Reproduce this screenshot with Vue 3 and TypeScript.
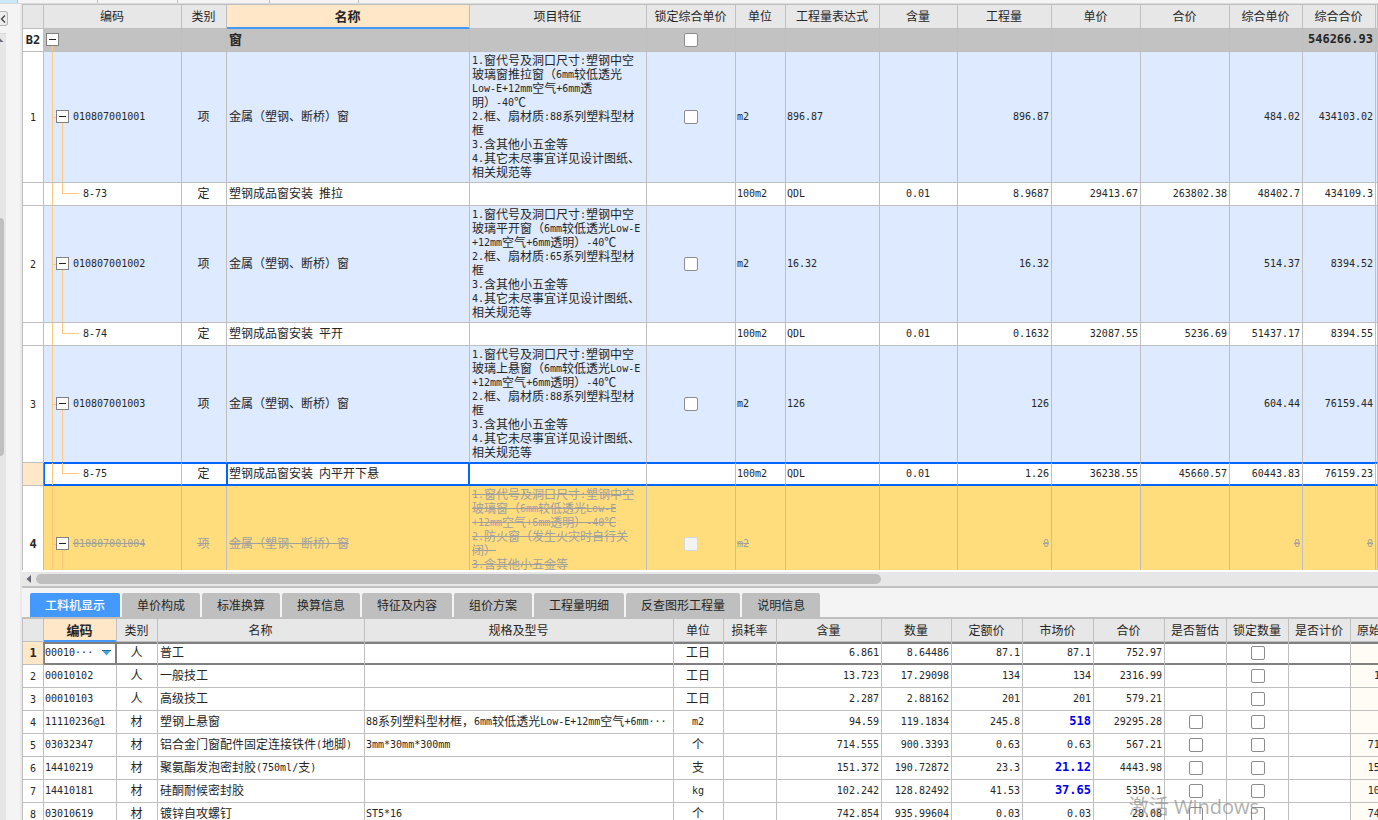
<script setup lang="ts">
import { h } from 'vue'

type Align = 'left' | 'center' | 'right'
interface Column { title: string; width?: number; align: Align }
interface BillRow {
  no: string
  kind: 'group' | 'item' | 'sub' | 'void'
  code: string
  type: string
  name: string
  feature: string[]
  check: boolean
  values: string[]
  selected?: boolean
}
interface Material {
  no: number
  code: string
  type: string
  name: string
  spec: string
  unit: string
  values: string[]
  changed?: boolean
  estimate?: boolean
  original: string
}

/* Latin runs are set in a monospaced face, half as wide as the ideographs. */
const Cell = (props: { text: string }) =>
  h(
    'span',
    { class: 'txt' },
    (props.text.match(/[\x20-\x7e\xb7]+|[^\x20-\x7e\xb7]+/g) ?? []).map((part) =>
      /^[\x20-\x7e\xb7]/.test(part) ? h('span', { class: 'lat' }, part) : part,
    ),
  )
Cell.props = ['text']

const billColumns: Column[] = [
  { title: '', width: 21, align: 'center' },
  { title: '编码', width: 138, align: 'left' },
  { title: '类别', width: 45, align: 'center' },
  { title: '名称', width: 243, align: 'left' },
  { title: '项目特征', width: 177, align: 'left' },
  { title: '锁定综合单价', width: 89, align: 'center' },
  { title: '单位', width: 50, align: 'left' },
  { title: '工程量表达式', width: 94, align: 'left' },
  { title: '含量', width: 78, align: 'center' },
  { title: '工程量', width: 94, align: 'right' },
  { title: '单价', width: 89, align: 'right' },
  { title: '合价', width: 89, align: 'right' },
  { title: '综合单价', width: 73, align: 'right' },
  { title: '综合合价', width: 73, align: 'right' },
  { title: '', align: 'left' },
]

const tailA = ['3.含其他小五金等', '4.其它未尽事宜详见设计图纸、', '相关规范等']
const itemName = '金属（塑钢、断桥）窗'

const bill: BillRow[] = [
  { no: 'B2', kind: 'group', code: '', type: '', name: '窗', feature: [], check: true, values: ['', '', '', '', '', '', '', '546266.93'] },
  {
    no: '1', kind: 'item', code: '010807001001', type: '项', name: itemName, check: true,
    feature: ['1.窗代号及洞口尺寸:塑钢中空', '玻璃窗推拉窗（6mm较低透光', 'Low-E+12mm空气+6mm透', '明）-40℃', '2.框、扇材质:88系列塑料型材', '框', ...tailA],
    values: ['m2', '896.87', '', '896.87', '', '', '484.02', '434103.02'],
  },
  { no: '', kind: 'sub', code: '8-73', type: '定', name: '塑钢成品窗安装 推拉', feature: [], check: false, values: ['100m2', 'QDL', '0.01', '8.9687', '29413.67', '263802.38', '48402.7', '434109.3'] },
  {
    no: '2', kind: 'item', code: '010807001002', type: '项', name: itemName, check: true,
    feature: ['1.窗代号及洞口尺寸:塑钢中空', '玻璃平开窗（6mm较低透光Low-E', '+12mm空气+6mm透明）-40℃', '2.框、扇材质:65系列塑料型材', '框', ...tailA],
    values: ['m2', '16.32', '', '16.32', '', '', '514.37', '8394.52'],
  },
  { no: '', kind: 'sub', code: '8-74', type: '定', name: '塑钢成品窗安装 平开', feature: [], check: false, values: ['100m2', 'QDL', '0.01', '0.1632', '32087.55', '5236.69', '51437.17', '8394.55'] },
  {
    no: '3', kind: 'item', code: '010807001003', type: '项', name: itemName, check: true,
    feature: ['1.窗代号及洞口尺寸:塑钢中空', '玻璃上悬窗（6mm较低透光Low-E', '+12mm空气+6mm透明）-40℃', '2.框、扇材质:88系列塑料型材', '框', ...tailA],
    values: ['m2', '126', '', '126', '', '', '604.44', '76159.44'],
  },
  { no: '', kind: 'sub', code: '8-75', type: '定', name: '塑钢成品窗安装 内平开下悬', feature: [], check: false, selected: true, values: ['100m2', 'QDL', '0.01', '1.26', '36238.55', '45660.57', '60443.83', '76159.23'] },
  {
    no: '4', kind: 'void', code: '010807001004', type: '项', name: itemName, check: true,
    feature: ['1.窗代号及洞口尺寸:塑钢中空', '玻璃窗（6mm较低透光Low-E', '+12mm空气+6mm透明）-40℃', '2.防火窗（发生火灾时自行关', '闭）', '3.含其他小五金等'],
    values: ['m2', '', '', '0', '', '', '0', '0'],
  },
]

const tabs = ['工料机显示', '单价构成', '标准换算', '换算信息', '特征及内容', '组价方案', '工程量明细', '反查图形工程量', '说明信息']

const materialColumns: Column[] = [
  { title: '', width: 21, align: 'center' },
  { title: '编码', width: 73, align: 'left' },
  { title: '类别', width: 41, align: 'center' },
  { title: '名称', width: 207, align: 'left' },
  { title: '规格及型号', width: 309, align: 'left' },
  { title: '单位', width: 50, align: 'center' },
  { title: '损耗率', width: 53, align: 'right' },
  { title: '含量', width: 105, align: 'right' },
  { title: '数量', width: 70, align: 'right' },
  { title: '定额价', width: 71, align: 'right' },
  { title: '市场价', width: 71, align: 'right' },
  { title: '合价', width: 71, align: 'right' },
  { title: '是否暂估', width: 62, align: 'center' },
  { title: '锁定数量', width: 62, align: 'center' },
  { title: '是否计价', width: 62, align: 'center' },
  { title: '原始含量', width: 62, align: 'right' },
]

const materials: Material[] = [
  { no: 1, code: '00010···', type: '人', name: '普工', spec: '', unit: '工日', values: ['6.861', '8.64486', '87.1', '87.1', '752.97'], original: '6.861' },
  { no: 2, code: '00010102', type: '人', name: '一般技工', spec: '', unit: '工日', values: ['13.723', '17.29098', '134', '134', '2316.99'], original: '13.723' },
  { no: 3, code: '00010103', type: '人', name: '高级技工', spec: '', unit: '工日', values: ['2.287', '2.88162', '201', '201', '579.21'], original: '2.287' },
  { no: 4, code: '11110236@1', type: '材', name: '塑钢上悬窗', spec: '88系列塑料型材框，6mm较低透光Low-E+12mm空气+6mm···', unit: 'm2', values: ['94.59', '119.1834', '245.8', '518', '29295.28'], changed: true, estimate: true, original: '94.59' },
  { no: 5, code: '03032347', type: '材', name: '铝合金门窗配件固定连接铁件(地脚)', spec: '3mm*30mm*300mm', unit: '个', values: ['714.555', '900.3393', '0.63', '0.63', '567.21'], estimate: true, original: '714.555' },
  { no: 6, code: '14410219', type: '材', name: '聚氨酯发泡密封胶(750ml/支)', spec: '', unit: '支', values: ['151.372', '190.72872', '23.3', '21.12', '4443.98'], changed: true, estimate: true, original: '151.372' },
  { no: 7, code: '14410181', type: '材', name: '硅酮耐候密封胶', spec: '', unit: 'kg', values: ['102.242', '128.82492', '41.53', '37.65', '5350.1'], changed: true, estimate: true, original: '102.242' },
  { no: 8, code: '03010619', type: '材', name: '镀锌自攻螺钉', spec: 'ST5*16', unit: '个', values: ['742.854', '935.99604', '0.03', '0.03', '28.08'], estimate: true, original: '742.854' },
]
</script>

<template>
  <div class="app">
    <div class="strip">
      <i class="s on"></i><i class="s a"></i><i class="s a"></i><i class="s b"></i><i class="s c"></i><i class="s rest"></i>
    </div>
    <div class="body">
      <aside class="side">
        <button class="collapse" type="button" aria-label="收起">
          <svg width="6" height="10" viewBox="0 0 6 10"><path d="M5 1.5 1.5 5 5 8.5" fill="none" stroke="#444" stroke-width="1.3" /></svg>
        </button>
        <div class="vtrack">
          <svg class="up" width="4" height="4" viewBox="0 0 4 4"><path d="M0 0.5 3.5 4H0z" fill="#6b6b7b" /></svg>
          <div class="vthumb"></div>
        </div>
      </aside>

      <main class="main">
        <section class="bill">
          <table class="grid">
            <colgroup><col v-for="(c, i) in billColumns" :key="i" :style="{ width: c.width ? c.width + 'px' : undefined }" /></colgroup>
            <thead>
              <tr>
                <th v-for="(c, i) in billColumns" :key="i" :class="{ current: i === 3 }">{{ c.title }}</th>
              </tr>
            </thead>
            <tbody>
              <tr v-for="row in bill" :key="row.code" :class="[row.kind, { selected: row.selected }]">
                <td class="no center"><Cell :text="row.no" /></td>
                <td class="tree">
                  <i class="trunk"></i>
                  <i v-if="row.kind === 'item' || row.kind === 'void'" class="branch"></i>
                  <i v-if="row.kind !== 'group'" class="twig"></i>
                  <button v-if="row.kind !== 'sub'" class="toggle" type="button" aria-label="折叠">
                    <svg width="11" height="11" viewBox="0 0 11 11"><path d="M2 5.5h7" stroke="#222" /></svg>
                  </button>
                  <Cell :text="row.code" />
                </td>
                <td class="center"><Cell :text="row.type" /></td>
                <td class="name"><Cell :text="row.name" /></td>
                <td class="feature"><div v-for="line in row.feature" :key="line" class="line"><Cell :text="line" /></div></td>
                <td class="check"><input v-if="row.check" type="checkbox" aria-label="锁定综合单价" :disabled="row.kind === 'void'" /></td>
                <td v-for="(v, i) in row.values" :key="i" :class="billColumns[i + 6].align"><Cell :text="v" /></td>
                <td></td>
              </tr>
            </tbody>
          </table>
        </section>

        <div class="hscroll">
          <svg class="prev" width="6" height="8" viewBox="0 0 6 8"><path d="M5 0v8L0.5 4z" fill="#666672" /></svg>
          <div class="rail"><div class="hthumb"></div></div>
        </div>

        <nav class="tabs">
          <button v-for="(t, i) in tabs" :key="t" type="button" :class="{ active: i === 0 }">{{ t }}</button>
        </nav>

        <section class="materials">
          <table class="grid wide">
            <colgroup><col v-for="(c, i) in materialColumns" :key="i" :style="{ width: c.width + 'px' }" /></colgroup>
            <thead>
              <tr>
                <th v-for="(c, i) in materialColumns" :key="i" :class="{ current: i === 1 }">{{ c.title }}</th>
              </tr>
            </thead>
            <tbody>
              <tr v-for="m in materials" :key="m.no" :class="{ active: m.no === 1 }">
                <td class="no center"><Cell :text="String(m.no)" /></td>
                <td class="mcode">
                  <div v-if="m.no === 1" class="picker">
                    <select aria-label="编码"><option>{{ m.code }}</option></select>
                    <svg width="9" height="6" viewBox="0 0 9 6"><path d="M0 0.5h9L4.5 5.5z" fill="#4aa3dc" /><path d="M0 0.5h9" stroke="#2d6f9e" /></svg>
                  </div>
                  <Cell v-else :text="m.code" />
                </td>
                <td class="center"><Cell :text="m.type" /></td>
                <td class="name"><Cell :text="m.name" /></td>
                <td><Cell :text="m.spec" /></td>
                <td class="center"><Cell :text="m.unit" /></td>
                <td></td>
                <td v-for="(v, i) in m.values" :key="i" class="right" :class="{ changed: m.changed && i === 3 }"><Cell :text="v" /></td>
                <td class="check"><input v-if="m.estimate" type="checkbox" aria-label="是否暂估" /></td>
                <td class="check"><input type="checkbox" aria-label="锁定数量" /></td>
                <td></td>
                <td class="right original"><Cell :text="m.original" /></td>
              </tr>
            </tbody>
          </table>
        </section>
      </main>
    </div>
    <div class="watermark">激活 Windows</div>
  </div>
</template>

<style>
body {
  margin: 0;
  overflow: hidden;
}
</style>

<style scoped>
.app {
  position: relative;
  display: flex;
  flex-direction: column;
  height: 100vh;
  overflow: hidden;
  background: #f4f4f4;
  color: #262626;
  font: 12px/14px 'Noto Sans CJK SC', sans-serif;
}
button {
  font: inherit;
  color: inherit;
  padding: 0;
}
.strip {
  display: flex;
  flex: 0 0 4px;
  box-sizing: border-box;
  border-bottom: 1px solid #d9d9d9;
}
.s {
  box-sizing: border-box;
  width: 80px;
  border-right: 1px solid #bfbfbf;
}
.s.on {
  width: 18px;
  background: #cce8ff;
}
.s.b {
  width: 92px;
}
.s.c {
  width: 89px;
}
.s.rest {
  flex: 1;
  border: 0;
}
.body {
  display: flex;
  flex: 1;
  min-height: 0;
}
.side {
  display: flex;
  flex-direction: column;
  flex: 0 0 22px;
  box-sizing: border-box;
  border-right: 2px solid #e9e9e9;
}
.collapse {
  display: flex;
  align-items: center;
  box-sizing: border-box;
  width: 8px;
  height: 15px;
  margin: 7px 0;
  border: 1px solid #b5b5b5;
  border-left: 0;
  border-radius: 0 3px 3px 0;
  background: #ececec;
}
.vtrack {
  flex: 1;
  width: 6px;
  background: #e6e6e6;
  border-top: 1px solid #dcdcdc;
}
.up {
  display: block;
  margin-top: 4px;
}
.vthumb {
  width: 4px;
  height: 238px;
  margin-top: 176px;
  border-radius: 0 5px 5px 0;
  background: #bfbfbf;
}
.main {
  display: flex;
  flex: 1;
  flex-direction: column;
  min-width: 0;
}
.bill {
  flex: 1;
  min-height: 0;
  overflow: hidden;
  border-bottom: 2px solid #fff;
}
.grid {
  table-layout: fixed;
  width: 100%;
  border-spacing: 0;
  border-top: 1px solid #bfbfbf;
  border-left: 1px solid #bfbfbf;
  background: #fff;
}
.wide {
  min-width: 1391px;
  border-top: 2px solid #bfbfbf;
}
th,
td {
  box-sizing: border-box;
  height: 23px;
  padding: 0 2px 2px 1px;
  border-right: 1px solid #bfbfbf;
  border-bottom: 1px solid #bfbfbf;
  overflow: hidden;
  white-space: pre;
  text-align: left;
  vertical-align: middle;
}
th {
  padding: 0 1px 0 0;
  background: #e7e7e7;
  font-weight: 400;
  text-align: center;
}
.bill th {
  height: 24px;
  padding-bottom: 2px;
}
th.current {
  background: #ffe7c7;
  border-bottom-color: #4499ff;
  box-shadow: inset 0 -1px #4499ff;
  font-size: 13px;
  font-weight: 700;
}
.center {
  padding: 0 1px 2px 0;
  text-align: center;
}
.name {
  padding-left: 2px;
}
.no,
.check {
  padding: 0;
}
.right {
  text-align: right;
}
:deep(.lat) {
  font: 10px/10px 'DejaVu Sans Mono', monospace;
  vertical-align: 1px;
}
input[type='checkbox'] {
  appearance: none;
  display: block;
  box-sizing: border-box;
  width: 14px;
  height: 14px;
  margin: 0 auto;
  border: 1px solid #8c8c8c;
  border-radius: 2px;
  background: #fff;
}
input[type='checkbox']:disabled {
  border-color: #d9d9d9;
  background: #f3f3f3;
}

.group td:not(.no) {
  background: #c2c2c2;
}
.item td:not(.no) {
  background: #ddeaff;
}
.void td:not(.no) {
  background: #ffdd7d;
  color: #a0a0a0;
}
/* One rule runs through a whole text, whatever the faces in it. */
.void td:not(.no) :deep(.txt) {
  display: inline-block;
  height: 14px;
  vertical-align: top;
  background: linear-gradient(#a0a0a0, #a0a0a0) center / 100% 1px no-repeat;
}
.item td,
.void td {
  height: 117px;
}
.group :deep(.txt),
.void .no {
  font-weight: 700;
}
.group :deep(.lat),
.void .no :deep(.lat),
.active .no :deep(.lat),
.changed :deep(.lat) {
  font: 700 12px/12px 'DejaVu Sans Mono', monospace;
}
.group .name :deep(.txt) {
  font-size: 13px;
}
.item .feature,
.void .feature {
  padding: 1px 0 3px 2px;
  vertical-align: top;
}
.line {
  height: 14px;
}
.item .tree,
.void .tree {
  padding-left: 29px;
}
.sub .tree {
  padding-left: 39px;
}

/* Hierarchy lines and the fold box lie over the code cell. */
.tree {
  position: relative;
}
.trunk,
.branch,
.twig,
.toggle {
  position: absolute;
  box-sizing: border-box;
}
.trunk {
  left: 8px;
  top: 0;
  bottom: 0;
  border-left: 1px solid #ffc97f;
}
.group .trunk {
  top: 50%;
}
.branch {
  left: 8px;
  top: 50%;
  width: 5px;
  border-top: 1px solid #ffc97f;
}
.twig {
  left: 18px;
  top: 50%;
  bottom: 0;
  border-left: 1px solid #ffc97f;
}
.sub .twig {
  top: 0;
  bottom: 50%;
  width: 17px;
  border-bottom: 1px solid #ffc97f;
}
.void .trunk,
.void .branch,
.void .twig {
  border-color: #ffc47e;
}
.toggle {
  left: 12px;
  top: calc(50% - 7px);
  display: flex;
  width: 13px;
  height: 13px;
  border: 1px solid #808080;
  background: #fff;
}
.group .toggle {
  left: 2px;
}

tr:has(+ .selected) td:not(.no),
.selected td:not(.no) {
  border-bottom-color: #0066ff;
}
.selected td:not(.no) {
  box-shadow: inset 0 1px #0066ff, inset 0 -1px #0066ff;
}
.selected .no {
  background: #ffe7c7;
  border-right-color: #4499ff;
}
.selected td.tree {
  box-shadow: inset 0 1px #0066ff, inset 0 -1px #0066ff, inset 1px 0 #0066ff;
}
.selected td:nth-child(3),
.selected td.name {
  border-right-color: #0066ff;
}
.selected td.name {
  box-shadow: inset 0 0 0 1px #0066ff;
}

.hscroll {
  display: flex;
  flex: 0 0 14px;
  align-items: center;
  background: #e7e7e7;
  border-bottom: 2px solid #bfbfbf;
}
.prev {
  margin: 0 4px;
}
.rail {
  flex: 1;
}
.hthumb {
  width: 63%;
  height: 10px;
  border-radius: 5px;
  background: #bfbfbf;
}
.tabs {
  display: flex;
  flex: 0 0 24px;
  gap: 2px;
  padding: 5px 0 0 8px;
}
.tabs button {
  padding: 0 15px;
  border: 0;
  border-radius: 2px 2px 0 0;
  background: #bfbfbf;
}
.tabs button.active {
  background: #4499ff;
  color: #fff;
  font-weight: 500;
}
.materials {
  flex: 0 0 203px;
  overflow: hidden;
}
.active .no {
  background: #ffe7c7;
  border-right-color: #4499ff;
}
.active td:not(.no) {
  border-bottom-color: #808080;
  box-shadow: inset 0 2px #808080, inset 0 -1px #808080;
}
.active td.mcode {
  padding: 0;
  border-right-color: #808080;
  box-shadow: inset 0 2px #808080, inset -1px -1px #808080, inset 1px 0 #808080;
}
.picker {
  display: flex;
  align-items: center;
  padding: 0 5px 0 0;
}
.picker select {
  appearance: none;
  flex: 1;
  min-width: 0;
  height: 16px;
  padding: 0 1px;
  border: 0;
  background: transparent;
  color: inherit;
  font: 10px/14px 'DejaVu Sans Mono', 'Noto Sans CJK SC', monospace;
}
.changed {
  color: #0000f0;
}
.original {
  background: #fffbf5;
}
.watermark {
  position: absolute;
  right: 119px;
  bottom: 0;
  color: rgba(120, 120, 120, 0.6);
  font: 20px/26px 'Open Sans', 'Noto Sans CJK SC', sans-serif;
  pointer-events: none;
}
</style>
